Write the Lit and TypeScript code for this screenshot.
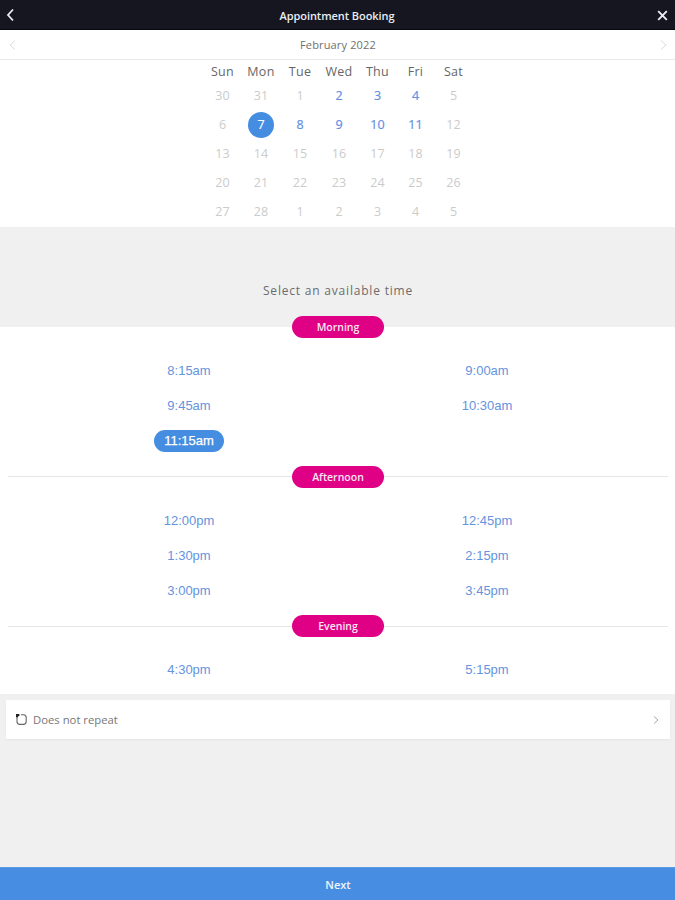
import { LitElement, html, css } from "lit";
import { customElement, state } from "lit/decorators.js";
import { classMap } from "lit/directives/class-map.js";

const WEEKDAYS = ["Sun", "Mon", "Tue", "Wed", "Thu", "Fri", "Sat"];
const DAYS = [30, 31, ...Array.from({ length: 28 }, (_, i) => i + 1), 1, 2, 3, 4, 5];
// Grid cells (0 = first Sunday shown) that can be booked.
const AVAILABLE = new Set([3, 4, 5, 8, 9, 10, 11, 12]);
const SECTIONS = [
  { name: "Morning", times: ["8:15am", "9:00am", "9:45am", "10:30am", "11:15am"] },
  { name: "Afternoon", times: ["12:00pm", "12:45pm", "1:30pm", "2:15pm", "3:00pm", "3:45pm"] },
  { name: "Evening", times: ["4:30pm", "5:15pm"] },
];

@customElement("app-root")
export class AppRoot extends LitElement {
  @state() private day = 8;
  @state() private time = "11:15am";

  static styles = css`
    :host {
      display: flex;
      flex-direction: column;
      height: 900px;
      background: #f0f0f0;
      font-family: "Open Sans", "Noto Sans", sans-serif;
      color: #555;
      overflow: hidden;
    }
    * { box-sizing: border-box; }
    svg { display: block; fill: none; stroke: currentColor; }
    button {
      font: inherit;
      color: inherit;
      background: none;
      border: 0;
      padding: 0;
      margin: 0;
    }
    header {
      flex: none;
      height: 30px;
      padding: 0 7px 0 6px;
      display: flex;
      align-items: center;
      justify-content: space-between;
      background: #15161f;
      border-bottom: 1px solid #08080f;
      color: #e9edf5;
    }
    .title { font-size: 11px; font-weight: 600; letter-spacing: -0.07px; padding: 1px 0 0 2px; }
    header button { padding-top: 1px; }
    .month {
      flex: none;
      height: 30px;
      padding: 0 7px 0 8px;
      display: flex;
      align-items: center;
      justify-content: space-between;
      background: #fff;
      border-bottom: 1px solid #e8e8e8;
      font-size: 11px;
      letter-spacing: 0.15px;
      color: #707070;
    }
    .month svg { color: #dcdcdc; }
    .calendar {
      flex: none;
      height: 167px;
      padding: 1px 0 0 1px;
      background: #fff;
      display: grid;
      grid-template-columns: 38px 39px 39px 39px 38px 38px 38px;
      grid-template-rows: 20px repeat(5, 29px);
      justify-content: center;
      justify-items: center;
      align-items: center;
      font-size: 12.5px;
    }
    .weekday { color: #666; letter-spacing: 0.3px; }
    .day {
      width: 26px;
      height: 26px;
      border-radius: 50%;
      line-height: 26px;
      text-align: center;
      color: #cbcbcb;
    }
    .day.open { color: #6290e3; -webkit-text-stroke: 0.2px #6290e3; }
    .day.selected { background: #458de0; color: #fff; -webkit-text-stroke: 0.2px #fff; }
    .prompt {
      flex: none;
      height: 100px;
      padding: 55px 0 0 1px;
      text-align: center;
      font-size: 12px;
      line-height: 18px;
      letter-spacing: 0.8px;
      color: #6c6c6c;
    }
    .times { flex: none; height: 367px; background: #fff; }
    .label {
      display: flex;
      align-items: center;
      height: 22px;
      padding: 0 7px 0 8px;
    }
    .label::before, .label::after {
      content: "";
      flex: 1;
      height: 1px;
      background: #e6e6e6;
    }
    .section:first-child .label { margin-top: -11px; }
    .section:first-child .label::before,
    .section:first-child .label::after { background: transparent; }
    .pill {
      width: 92px;
      height: 22px;
      border-radius: 11px;
      background: #df0085;
      color: #fbe6f3;
      font-size: 10.5px;
      font-weight: 600;
      line-height: 22px;
      text-align: center;
    }
    .slots {
      display: grid;
      grid-template-columns: 298px 298px;
      grid-auto-rows: 35px;
      justify-content: center;
      justify-items: center;
      align-items: center;
      padding: 15.5px 0 7px 1px;
      font-family: "Liberation Sans", Arial, sans-serif;
      font-size: 13px;
      color: #6593de;
    }
    .slot { height: 22px; width: 70px; border-radius: 11px; line-height: 22px; text-align: center; }
    .slot.selected { background: #458de0; color: #fff; -webkit-text-stroke: 0.25px #fff; }
    .repeat {
      flex: none;
      height: 39px;
      margin: 6px 5px 0 6px;
      padding: 0 10px 0 9px;
      display: flex;
      align-items: center;
      gap: 5px;
      background: #fff;
      box-shadow: 0 1px 2px rgba(0, 0, 0, 0.05);
      font-size: 11.3px;
      color: #777;
    }
    .repeat svg { color: #666; }
    .repeat .text { flex: 1; text-align: left; }
    .repeat .go svg { color: #aaa; }
    .next {
      flex: none;
      height: 33px;
      margin-top: auto;
      padding: 0 0 0 1px;
      background: #478ee2;
      border-top: 1px solid #5b9ae4;
      color: #eef5fd;
      font-size: 11px;
      font-weight: 600;
    }
  `;

  private chevron(left: boolean, w: number, h: number, stroke: number) {
    const d = left
      ? `M${w - 2} 1.5 L2 ${h / 2} L${w - 2} ${h - 1.5}`
      : `M2 1.5 L${w - 2} ${h / 2} L2 ${h - 1.5}`;
    return html`<svg width=${w} height=${h} viewBox="0 0 ${w} ${h}" stroke-width=${stroke}><path d=${d} /></svg>`;
  }

  render() {
    return html`
      <header>
        <button aria-label="Back">${this.chevron(true, 9, 14, 1.8)}</button>
        <span class="title">Appointment Booking</span>
        <button aria-label="Close">
          <svg width="11" height="11" viewBox="0 0 11 11" stroke-width="1.9"><path d="M1.2 1.2 L9.8 9.8 M9.8 1.2 L1.2 9.8" /></svg>
        </button>
      </header>
      <div class="month">
        ${this.chevron(true, 9, 12, 1)}<span>February 2022</span>${this.chevron(false, 9, 12, 1)}
      </div>
      <div class="calendar">
        ${WEEKDAYS.map((d) => html`<span class="weekday">${d}</span>`)}
        ${DAYS.map(
          (d, i) => html`<button
            class=${classMap({ day: true, open: AVAILABLE.has(i), selected: i === this.day })}
            @click=${() => (this.day = i)}
          >${d}</button>`
        )}
      </div>
      <div class="prompt">Select an available time</div>
      <div class="times">
        ${SECTIONS.map(
          (s) => html`<div class="section">
            <div class="label"><span class="pill">${s.name}</span></div>
            <div class="slots">
              ${s.times.map(
                (t) => html`<button
                  class=${classMap({ slot: true, selected: t === this.time })}
                  @click=${() => (this.time = t)}
                >${t}</button>`
              )}
            </div>
          </div>`
        )}
      </div>
      <button class="repeat">
        <svg width="13" height="13" viewBox="0 0 13 13" stroke-width="1.1">
          <path d="M6 1.8 H8.6 Q11.2 2 11.2 4.6 V8.6 Q11.2 11.4 8.4 11.4 H4.8 Q2 11.4 2 8.6 V3" />
          <path d="M1 1 H4.4 V3 H3.2 V4.2 H1 Z" fill="#222" stroke="none" />
        </svg>
        <span class="text">Does not repeat</span>
        <span class="go">${this.chevron(false, 8, 10, 1)}</span>
      </button>
      <button class="next">Next</button>
    `;
  }
}
